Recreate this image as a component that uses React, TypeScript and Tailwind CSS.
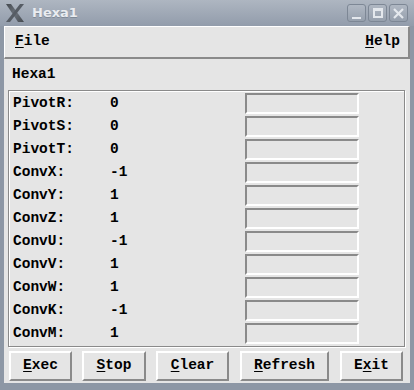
import React from "react";

const mono = { fontFamily: '"Liberation Mono", "DejaVu Sans Mono", monospace' };

const rows: [string, string][] = [
  ["PivotR:", "0"],
  ["PivotS:", "0"],
  ["PivotT:", "0"],
  ["ConvX:", "-1"],
  ["ConvY:", "1"],
  ["ConvZ:", "1"],
  ["ConvU:", "-1"],
  ["ConvV:", "1"],
  ["ConvW:", "1"],
  ["ConvK:", "-1"],
  ["ConvM:", "1"],
];

function TitleBtn({ children }: { children: React.ReactNode }) {
  return (
    <div className="w-[19px] h-[18px] rounded-[3px] border border-[#7d8795] bg-gradient-to-b from-[#b0b8c3] to-[#96a0ad] flex items-center justify-center">
      {children}
    </div>
  );
}

function Btn({ w, pre, u, post }: { w: number; pre: string; u: string; post: string }) {
  return (
    <div
      className="h-[30px] flex items-center justify-center border-2 border-t-white border-l-white border-b-[#8a8a8a] border-r-[#8a8a8a] bg-[#e5e5e5] font-bold text-[14.5px] text-black"
      style={{ ...mono, width: w }}
    >
      <span>
        {pre}
        <span className="underline underline-offset-2">{u}</span>
        {post}
      </span>
    </div>
  );
}

export default function App() {
  return (
    <div className="w-[414px] h-[390px] bg-[#8d97a5] flex flex-col overflow-hidden">
      {/* title bar */}
      <div className="h-[26px] bg-gradient-to-b from-[#aeb6c1] to-[#929cab] flex items-center pl-[5px] pr-[6px]">
        <svg width="20" height="20" viewBox="0 0 20 20">
          <defs>
            <linearGradient id="xg" x1="0" y1="0" x2="1" y2="1">
              <stop offset="0" stopColor="#44494f" />
              <stop offset="0.5" stopColor="#6c737c" />
              <stop offset="1" stopColor="#44494f" />
            </linearGradient>
          </defs>
          <polygon points="1,1 6,1 19,19 13,19" fill="url(#xg)" />
          <polygon points="15,1 19,1 5,19 1,19" fill="#565c64" />
        </svg>
        <span
          className="ml-[7px] text-[13px] font-bold text-[#e9ecf0]"
          style={{ fontFamily: '"DejaVu Sans", "Liberation Sans", sans-serif', textShadow: "0 1px 0 #7f8996" }}
        >
          Hexa1
        </span>
        <div className="ml-auto flex gap-[2px] items-center">
          <TitleBtn>
            <div className="w-[9px] h-[2px] bg-[#e4e8ed] mt-[9px]" />
          </TitleBtn>
          <TitleBtn>
            <div className="w-[10px] h-[10px] border-2 border-[#e4e8ed] border-t-[3px]" />
          </TitleBtn>
          <TitleBtn>
            <svg width="11" height="11" viewBox="0 0 11 11">
              <path d="M1 1 L10 10 M10 1 L1 10" stroke="#e4e8ed" strokeWidth="2.2" />
            </svg>
          </TitleBtn>
        </div>
      </div>

      {/* client area */}
      <div className="flex-1 ml-[4px] mr-[4px] mb-[7px] bg-[#e5e5e5] flex flex-col">
        {/* menubar */}
        <div
          className="h-[33px] border-t border-l border-t-white border-l-white border-b-2 border-r-2 border-b-[#8a8a8a] border-r-[#8a8a8a] flex items-center justify-between pl-[10px] pr-[8px] font-bold text-[14.5px] text-black"
          style={mono}
        >
          <span>
            <span className="underline underline-offset-2">F</span>ile
          </span>
          <span>
            <span className="underline underline-offset-2">H</span>elp
          </span>
        </div>

        {/* label */}
        <div className="h-[31px] flex items-center pl-[8px] font-bold text-[14.5px] text-black" style={mono}>
          Hexa1
        </div>

        {/* group frame */}
        <div className="ml-[4px] mr-[5px] border border-[#8a8a8a] shadow-[1px_1px_0_white,inset_1px_1px_0_white] pt-[1px] pb-[1px]">
          {rows.map(([l, v]) => (
            <div key={l} className="h-[23px] flex items-center font-bold text-[14.5px] text-black" style={mono}>
              <span className="w-[101px] pl-[4px]">{l}</span>
              <span className="w-[135px]">{v}</span>
              <div className="w-[114px] h-[21px] border-2 border-t-[#8a8a8a] border-l-[#8a8a8a] border-b-white border-r-white bg-[#e5e5e5]" />
            </div>
          ))}
        </div>

        {/* buttons */}
        <div className="mt-[4px] flex pl-[5px] gap-[11px]">
          <Btn w={63} pre="" u="E" post="xec" />
          <div className="-ml-[1px]">
            <Btn w={64} pre="" u="S" post="top" />
          </div>
          <div className="-ml-[1px]">
            <Btn w={73} pre="" u="C" post="lear" />
          </div>
          <Btn w={89} pre="" u="R" post="efresh" />
          <Btn w={63} pre="E" u="x" post="it" />
        </div>
      </div>
    </div>
  );
}
